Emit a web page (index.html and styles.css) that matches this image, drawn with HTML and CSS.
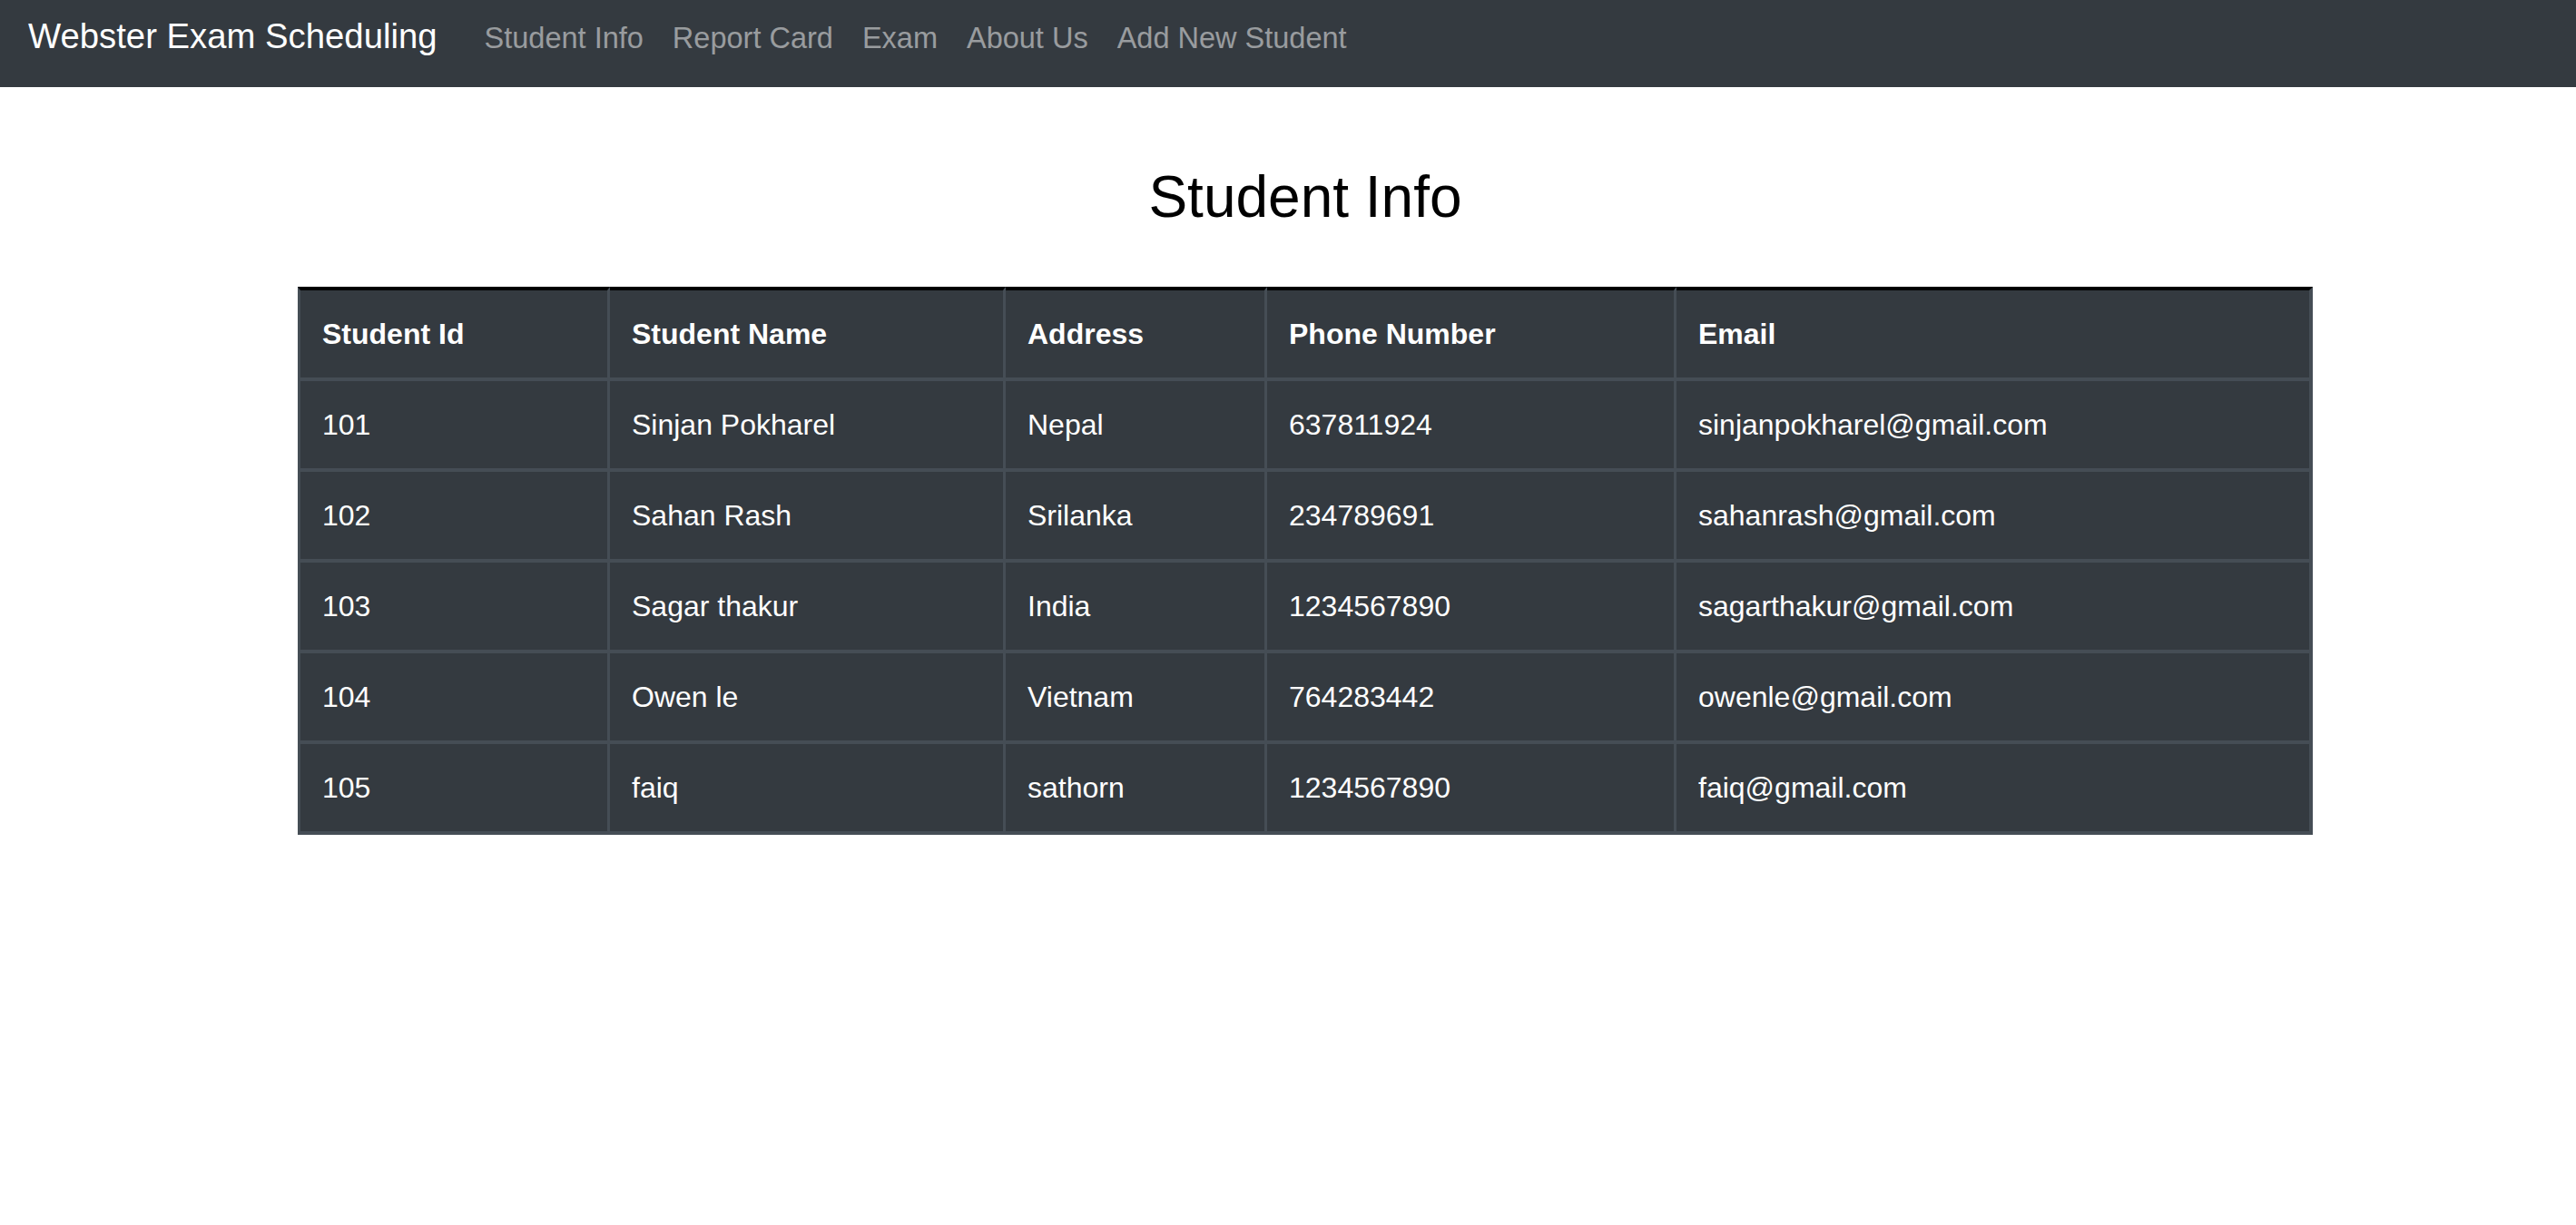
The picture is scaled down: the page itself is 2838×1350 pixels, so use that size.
FILE: index.html
```html
<!DOCTYPE html>
<html lang="en">
<head>
<meta charset="utf-8">
<title>Webster Exam Scheduling</title>
<link rel="stylesheet" href="styles.css">
</head>
<body>
<nav class="navbar">
  <a class="brand" href="#">Webster Exam Scheduling</a>
  <ul class="nav-links">
    <li><a href="#">Student Info</a></li>
    <li><a href="#">Report Card</a></li>
    <li><a href="#">Exam</a></li>
    <li><a href="#">About Us</a></li>
    <li><a href="#">Add New Student</a></li>
  </ul>
</nav>
<main class="main">
  <section class="content">
    <h1 class="title">Student Info</h1>
    <table class="students">
      <colgroup>
        <col class="c-id">
        <col class="c-name">
        <col class="c-addr">
        <col class="c-phone">
        <col class="c-email">
      </colgroup>
      <thead>
        <tr><th>Student Id</th><th>Student Name</th><th>Address</th><th>Phone Number</th><th>Email</th></tr>
      </thead>
      <tbody>
        <tr><td>101</td><td>Sinjan Pokharel</td><td>Nepal</td><td>637811924</td><td>sinjanpokharel@gmail.com</td></tr>
        <tr><td>102</td><td>Sahan Rash</td><td>Srilanka</td><td>234789691</td><td>sahanrash@gmail.com</td></tr>
        <tr><td>103</td><td>Sagar thakur</td><td>India</td><td>1234567890</td><td>sagarthakur@gmail.com</td></tr>
        <tr><td>104</td><td>Owen le</td><td>Vietnam</td><td>764283442</td><td>owenle@gmail.com</td></tr>
        <tr><td>105</td><td>faiq</td><td>sathorn</td><td>1234567890</td><td>faiq@gmail.com</td></tr>
      </tbody>
    </table>
  </section>
</main>
</body>
</html>
```
FILE: styles.css
```css
html, body {
  margin: 0;
  padding: 0;
  background: #fff;
}
body {
  font-family: "Liberation Sans", Arial, sans-serif;
  color: #000;
}
.navbar {
  display: flex;
  align-items: baseline;
  box-sizing: border-box;
  height: 96px;
  padding: 21px 32px 0 31px;
  background: #343a40;
}
.brand {
  font-size: 38.3px;
  line-height: 1;
  color: #fff;
  text-decoration: none;
  margin-right: 36px;
}
.nav-links {
  display: flex;
  align-items: baseline;
  list-style: none;
  margin: 0;
  padding: 0;
}
.nav-links a {
  display: block;
  font-size: 32.5px;
  line-height: 1;
  padding: 0 16px;
  color: rgba(255, 255, 255, 0.5);
  text-decoration: none;
}
.main {
  display: flex;
  justify-content: center;
  padding-left: 38px;
}
.content {
  width: 2220px;
}
.title {
  margin: 83px 0 60px 0;
  font-size: 64px;
  line-height: 1.2;
  font-weight: normal;
  text-align: center;
  color: #000;
}
.students {
  width: 2220px;
  table-layout: fixed;
  border-collapse: separate;
  border-spacing: 0;
  background: #343a40;
  color: #fff;
  font-size: 32px;
}
.c-id { width: 344px; }
.c-name { width: 436px; }
.c-addr { width: 288px; }
.c-phone { width: 451px; }
.c-email { width: 701px; }
.students th,
.students td {
  box-sizing: border-box;
  height: 100px;
  padding: 0 24px;
  line-height: 48px;
  text-align: left;
  vertical-align: middle;
  border-right: 3px solid #454d55;
  border-bottom: 4px solid #454d55;
  white-space: nowrap;
}
.students th {
  font-weight: bold;
  border-top: 4px solid #000;
  height: 104px;
}
.students th:first-child,
.students td:first-child {
  border-left: 3px solid #454d55;
}
.students th:last-child,
.students td:last-child {
  border-right: 4px solid #454d55;
}
```
